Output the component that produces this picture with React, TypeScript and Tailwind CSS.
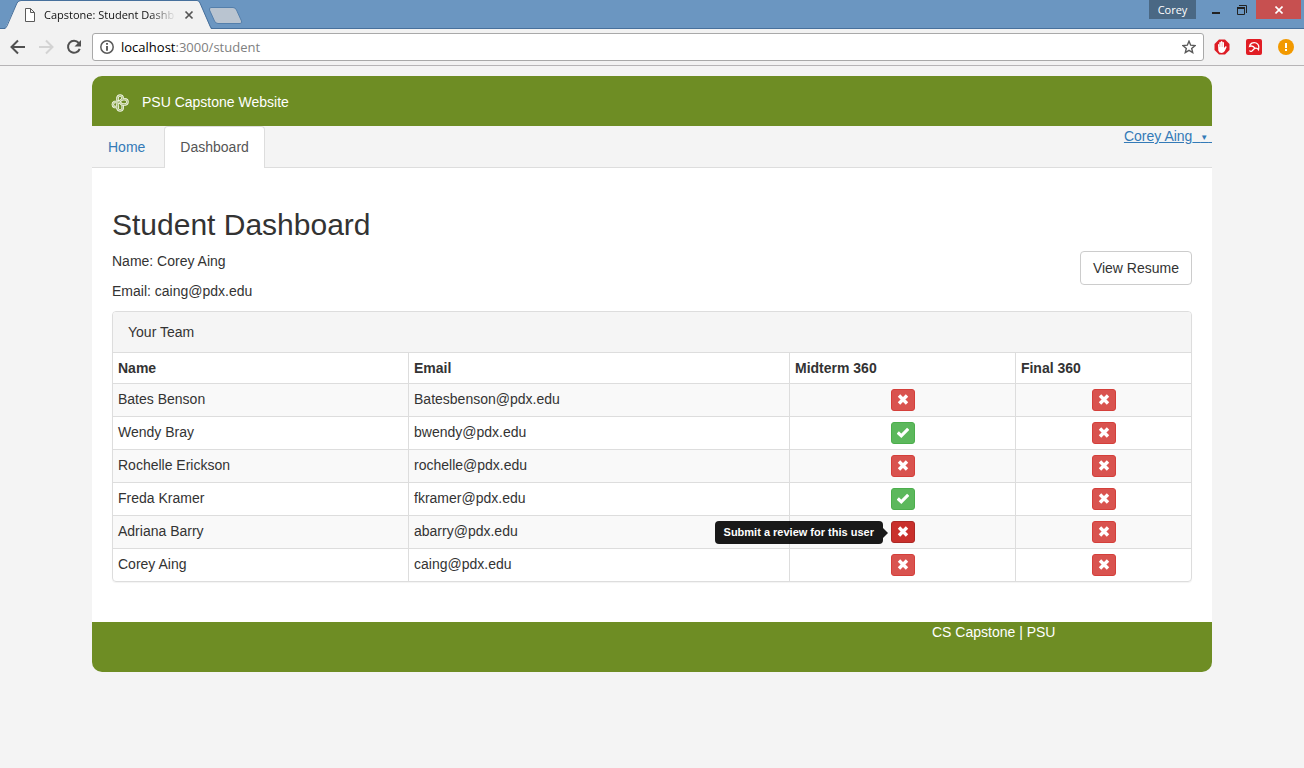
import type { ReactNode } from "react";

type Member = { name: string; email: string; midterm: boolean; final: boolean; hint?: boolean };

const team: Member[] = [
  { name: "Bates Benson", email: "Batesbenson@pdx.edu", midterm: false, final: false },
  { name: "Wendy Bray", email: "bwendy@pdx.edu", midterm: true, final: false },
  { name: "Rochelle Erickson", email: "rochelle@pdx.edu", midterm: false, final: false },
  { name: "Freda Kramer", email: "fkramer@pdx.edu", midterm: true, final: false },
  { name: "Adriana Barry", email: "abarry@pdx.edu", midterm: false, final: false, hint: true },
  { name: "Corey Aing", email: "caing@pdx.edu", midterm: false, final: false },
];

function RemoveGlyph() {
  return (
    <svg className="h-3 w-3" viewBox="0 0 12 12" fill="none" stroke="#fff" strokeWidth="3.4" aria-hidden="true">
      <path d="M2 1.5 10 9.5M10 1.5 2 9.5" />
    </svg>
  );
}

function OkGlyph() {
  return (
    <svg className="h-3 w-3" viewBox="0 0 12 12" fill="none" stroke="#fff" strokeWidth="3.2" aria-hidden="true">
      <path d="M.8 5.5 4.3 8.8 11.2 1.800" />
    </svg>
  );
}

function ReviewButton({ done, hint, label }: { done: boolean; hint?: boolean; label: string }) {
  const tone = done
    ? "border-[#4cae4c] bg-[#5cb85c]"
    : hint
      ? "border-[#ac2925] bg-[#c9302c]"
      : "border-[#d43f3a] bg-[#d9534f]";
  return (
    <div className="relative mx-auto flex h-[22px] w-[25px] justify-end">
      {hint && (
        <div role="tooltip" className="absolute top-0 right-[27px] flex h-[23px] items-center">
          <span className="rounded bg-[#000000e6] px-[9px] text-[11px] leading-[23px] font-bold whitespace-nowrap text-white">
            Submit a review for this user
          </span>
          <svg className="h-[10px] w-[5px]" viewBox="0 0 5 10" aria-hidden="true">
            <path d="M0 0 5 5 0 10Z" fill="#000" fillOpacity=".9" />
          </svg>
        </div>
      )}
      <button type="button" aria-label={label} className={`flex h-[22px] w-6 items-center justify-center rounded-[3px] border ${tone}`}>
        {done ? <OkGlyph /> : <RemoveGlyph />}
      </button>
    </div>
  );
}

function Th({ children, width }: { children: ReactNode; width: string }) {
  return (
    <th scope="col" className={`border-r border-b border-[#ddd] p-[5px] text-left font-bold last:border-r-0 ${width}`}>
      {children}
    </th>
  );
}

function BrowserChrome() {
  return (
    <header className="font-['Open_Sans',sans-serif]">
      <div className="flex h-[29px] items-start border-b border-[#47709c] bg-[#6b96c1]">
        <div className="relative flex h-[29px] w-[212px] shrink-0 items-center pt-px pl-[23px]">
          <svg className="absolute inset-0 h-[29px] w-[212px]" viewBox="0 0 212 29" aria-hidden="true">
            <path d="M5 29 17 3Q18.500 .5 21 .5H197Q199 .5 200 3L211 29Z" fill="#f2f2f2" />
            <path d="M0 28.500H4Q6 28.500 7 26L17 3Q18.500 .5 21 .5H197Q199 .5 200 3L210 26Q211 28.500 212 28.500" fill="none" stroke="#47709c" />
          </svg>
          <svg className="relative h-[14px] w-3" viewBox="0 0 12 14" fill="#fff" stroke="#5a5a5a" aria-hidden="true">
            <path d="M2.500 .5H7.500L11.500 4.500V13.500H2.500ZM7.500 .5V4.500H11.500" />
          </svg>
          <span className="relative ml-[9px] w-[132px] mask-r-from-80% text-[11px] leading-5 whitespace-nowrap text-[#111]">
            Capstone: Student Dashb
          </span>
          <button type="button" aria-label="Close tab" className="relative ml-2 flex h-4 w-4 items-center">
            <svg className="h-[10px] w-[10px]" viewBox="0 0 10 10" stroke="#555" strokeWidth="1.700" aria-hidden="true">
              <path d="m1.500 1.500 7 7M8.500 1.500l-7 7" />
            </svg>
          </button>
        </div>
        <button type="button" aria-label="New tab" className="-ml-1 pt-[7px]">
          <svg className="h-[18px] w-9" viewBox="0 0 36 18" aria-hidden="true">
            <path d="M3 .5H25Q27.500 .5 28.500 3L33.500 14Q34.500 16.500 32 16.500H10Q7.500 16.500 6.500 14L1.500 3Q1 .5 3 .5Z" fill="#b9c4d0" stroke="#547fab" />
          </svg>
        </button>
        <div className="ml-auto flex h-[19px] items-stretch">
          <button type="button" className="w-[47px] bg-[#4a6884] text-[11px] leading-[18px] text-white">
            Corey
          </button>
          <button type="button" aria-label="Minimize" className="flex w-[31px] items-center justify-end pr-[7px]">
            <svg className="h-[10px] w-2" viewBox="0 0 8 10" aria-hidden="true"><path d="M0 7H8V9H0Z" fill="#222" /></svg>
          </button>
          <button type="button" aria-label="Restore" className="flex w-[29px] items-center justify-center">
            <svg className="h-[10px] w-[10px]" viewBox="0 0 10 10" fill="none" stroke="#222" aria-hidden="true">
              <path d="M.5 3V9.500H7.500V3M2 .5H9.500V8" />
              <path d="M0 3H8" strokeWidth="2" />
            </svg>
          </button>
          <button type="button" aria-label="Close" className="flex w-[45px] items-center justify-center bg-[#c75050]">
            <svg className="h-2 w-2" viewBox="0 0 8 8" stroke="#fff" strokeWidth="1.600" aria-hidden="true"><path d="m.5 .5 7 7M7.500 .5l-7 7" /></svg>
          </button>
          <span className="w-[3px]" />
        </div>
      </div>
      <div className="flex h-[37px] items-center border-b border-[#b6b4b6] bg-[#f2f2f2] pl-[10px]">
        <button type="button" aria-label="Back">
          <svg className="h-4 w-4" viewBox="0 0 16 16" fill="none" stroke="#505050" strokeWidth="2" aria-hidden="true"><path d="M15 8H2M8 1.500 1.500 8 8 14.500" /></svg>
        </button>
        <button type="button" aria-label="Forward" className="ml-3">
          <svg className="h-4 w-4" viewBox="0 0 16 16" fill="none" stroke="#d3d3d3" strokeWidth="2" aria-hidden="true"><path d="M1 8H14M8 1.500 14.500 8 8 14.500" /></svg>
        </button>
        <button type="button" aria-label="Reload" className="ml-3">
          <svg className="h-4 w-4" viewBox="0 0 16 16" aria-hidden="true">
            <path d="M12.700 4A6 6 0 1 0 13.700 9.800" fill="none" stroke="#505050" strokeWidth="2" />
            <path d="M15 1V7.500H8.500Z" fill="#505050" />
          </svg>
        </button>
        <div className="ml-[10px] flex h-7 grow items-center rounded-[3px] border border-[#a9a9a9] bg-white pl-[7px]">
          <svg className="h-[14px] w-[14px]" viewBox="0 0 14 14" aria-hidden="true">
            <circle cx="7" cy="7" r="6.200" fill="none" stroke="#5a5a5a" strokeWidth="1.500" />
            <path d="M6.100 3H7.900V4.800H6.100ZM6.100 6H7.900V10.800H6.100Z" fill="#505050" />
          </svg>
          <span className="ml-[7px] text-[13px] leading-5 text-black">
            localhost<span className="text-[#808080]">:3000/student</span>
          </span>
          <button type="button" aria-label="Bookmark this page" className="mr-[7px] ml-auto">
            <svg className="h-[14px] w-[14px]" viewBox="0 0 14 14" fill="none" stroke="#5a5a5a" strokeWidth="1.400" aria-hidden="true">
              <path d="M7 1.200 8.700 5.200 13 5.600 9.700 8.400 10.700 12.600 7 10.400 3.300 12.600 4.300 8.400 1 5.600 5.300 5.200Z" />
            </svg>
          </button>
        </div>
        <div className="flex items-center gap-4 pr-[10px] pl-[10px]">
          <button type="button" aria-label="Content blocker">
            <svg className="h-4 w-4" viewBox="0 0 16 16" aria-hidden="true">
              <path d="M5 .5H11L15.500 5V11L11 15.500H5L.5 11V5Z" fill="#dd1c24" />
              <path d="M4 5.500Q4.600 4.500 5.300 5.500V3.500Q6 2.500 6.800 3.500V2.500Q7.600 1.500 8.400 2.500V3.500Q9.200 2.500 10 3.500V9L11.500 7.200Q12.800 7 12.600 8.200L10.800 12Q9.500 14 7.500 14 5 14 4.300 11.500Z" fill="#fff" />
              <path d="M5.500 5V8M7 4V8M8.500 4V8" stroke="#e9a9ab" strokeWidth=".5" />
            </svg>
          </button>
          <button type="button" aria-label="Browser safety">
            <svg className="h-4 w-4" viewBox="0 0 16 16" fill="none" stroke="#fff" strokeWidth="1.300" aria-hidden="true">
              <rect width="16" height="16" rx="2" fill="#e11d24" stroke="none" />
              <path d="M3.500 7.500C4 4.500 7 2.800 10.200 4 12.800 5.200 13.200 8 12.500 10.700 11.500 9.300 10.200 9 9 9.300 7.700 7.300 5.700 6.500 3.500 7.500Z" />
              <path d="M9 9 6 12Q4.500 13 3.500 11.500" />
            </svg>
          </button>
          <button type="button" aria-label="Chrome notice">
            <svg className="h-4 w-4" viewBox="0 0 16 16" aria-hidden="true">
              <circle cx="8" cy="8" r="8" fill="#f29900" />
              <path d="M7 4H9V9H7ZM7 10H9V12H7Z" fill="#fff" />
            </svg>
          </button>
        </div>
      </div>
    </header>
  );
}

function KnotLogo() {
  return (
    <svg className="h-5 w-5" viewBox="0 0 20 20" fill="none" strokeLinecap="round" aria-hidden="true">
      <g stroke="#f1f5e6" strokeWidth="2.600">
        <path d="M8 14H4.500A2.700 2.700 0 0 1 4.500 9H8C11 9 10.500 11.500 13 11.500H15.300A2.700 2.700 0 0 0 15.300 6.200H12.500" />
        <path d="M7.500 7V4.500A2.700 2.700 0 0 1 12.700 4.500C12.700 8 7.500 8 7.500 11V15.500A2.700 2.700 0 0 0 12.700 15.500V13" />
      </g>
      <g stroke="#8da653" strokeWidth=".7">
        <path d="M8 14H4.500A2.700 2.700 0 0 1 4.500 9H8C11 9 10.500 11.500 13 11.500H15.300A2.700 2.700 0 0 0 15.300 6.200H12.500" />
        <path d="M7.500 7V4.500A2.700 2.700 0 0 1 12.700 4.500C12.700 8 7.500 8 7.500 11V15.500A2.700 2.700 0 0 0 12.700 15.500V13" />
      </g>
    </svg>
  );
}

export default function App() {
  return (
    <div className="min-h-screen bg-[#f4f4f4] font-['Liberation_Sans',Arial,sans-serif] text-sm leading-5 text-[#333]">
      <BrowserChrome />
      <div className="mx-auto mt-[10px] max-w-[1120px]">
        <div className="flex h-[50px] items-center rounded-t-[10px] bg-[#6e8d24] pl-[18px] text-white">
          <span className="pt-1"><KnotLogo /></span>
          <span className="ml-3 pt-px">PSU Capstone Website</span>
        </div>
        <div className="flex h-[42px] items-start border-b border-[#ddd]">
          <nav className="flex">
            <a href="#home" className="border border-transparent px-[15px] py-[10px] text-[#337ab7]">Home</a>
            <a href="#dashboard" aria-current="page" className="ml-[3px] rounded-t border border-b-0 border-[#ddd] bg-white px-[15px] pt-[10px] pb-[11px] text-[#555]">
              Dashboard
            </a>
          </nav>
          <a href="#account" className="ml-auto whitespace-pre text-[#337ab7] underline">
            Corey Aing{"\u00a0 "}<span className="align-[1px] text-[8px]">▼</span>{"\u00a0"}
          </a>
        </div>
        <main className="bg-white p-5">
          <h1 className="mt-5 mb-[10px] text-[30px] leading-[33px] font-medium">Student Dashboard</h1>
          <div className="flex items-start justify-between">
            <div>
              <p className="mb-[10px]">Name: Corey Aing</p>
              <p className="mb-[10px]">Email: caing@pdx.edu</p>
            </div>
            <button type="button" className="rounded border border-[#ccc] bg-white px-3 py-[6px]">View Resume</button>
          </div>
          <section className="mb-5 rounded border border-[#ddd] shadow-[0_1px_1px_rgba(0,0,0,0.05)]">
            <h2 className="rounded-t-[3px] border-b border-[#ddd] bg-[#f5f5f5] px-[15px] py-[10px]">Your Team</h2>
            <table className="w-full table-fixed border-separate border-spacing-0">
              <thead>
                <tr>
                  <Th width="w-[27.46%]">Name</Th>
                  <Th width="w-[35.34%]">Email</Th>
                  <Th width="w-[20.96%]">Midterm 360</Th>
                  <Th width="w-[16.24%]">Final 360</Th>
                </tr>
              </thead>
              <tbody className="[&>tr:last-child>td]:border-b-0 [&>tr:nth-child(odd)]:bg-[#f9f9f9] [&_td]:border-b [&_td]:border-[#ddd] [&_td]:p-[5px] [&_td]:align-top [&_td:not(:last-child)]:border-r">
                {team.map((m) => (
                  <tr key={m.name}>
                    <td>{m.name}</td>
                    <td>{m.email}</td>
                    <td><ReviewButton done={m.midterm} hint={m.hint} label={`Midterm review for ${m.name}`} /></td>
                    <td><ReviewButton done={m.final} label={`Final review for ${m.name}`} /></td>
                  </tr>
                ))}
              </tbody>
            </table>
          </section>
        </main>
        <footer className="h-[50px] rounded-b-[10px] bg-[#6e8d24] pl-[75%] text-white">CS Capstone | PSU</footer>
      </div>
    </div>
  );
}
